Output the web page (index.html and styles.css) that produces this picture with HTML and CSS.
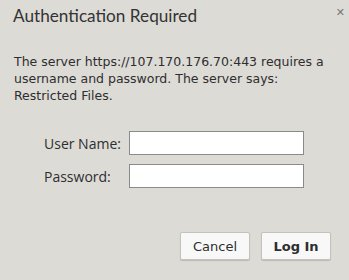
FILE: index.html
```html
<!DOCTYPE html>
<html lang="en">
<head>
    <meta charset="UTF-8">
    <title>Authentication Required</title>
    <link rel="stylesheet" href="styles.css">
</head>
<body>
    <div class="dialog">
        <div class="header">
            <h1>Authentication Required</h1>
            <span class="close">&#x2715;</span>
        </div>
        <p class="message">The server https://107.170.176.70:443 requires a username and password. The server says: Restricted Files.</p>
        <div class="form">
            <label for="user">User Name:</label>
            <input id="user" type="text">
            <label for="pass">Password:</label>
            <input id="pass" type="password">
        </div>
        <div class="button-container">
            <button class="cancel">Cancel</button>
            <button class="login">Log In</button>
        </div>
    </div>
</body>
</html>
```

FILE: styles.css
```css
body {
    margin: 0;
    background-color: #dddbd6;
    font-family: "DejaVu Sans", sans-serif;
    color: #2e2e2e;
}
.dialog {
    width: 349px;
    height: 280px;
    box-sizing: border-box;
    padding: 5px 0 0 13px;
}
.header {
    display: flex;
    justify-content: space-between;
    align-items: flex-start;
}
h1 {
    margin: 0;
    font-family: Lato, sans-serif;
    font-weight: normal;
    font-size: 17.2px;
    line-height: 22px;
    color: #333;
}
.close {
    font-size: 11px;
    font-weight: bold;
    color: #777;
    margin: 1px 4px 0 0;
}
.message {
    margin: 26px 0 0 1px;
    width: 320px;
    font-size: 12.5px;
    line-height: 17px;
}
.form {
    display: grid;
    grid-template-columns: 85px 175px;
    row-gap: 9px;
    align-items: center;
    margin: 27px 0 0 31px;
    font-family: "Open Sans", sans-serif;
    font-size: 14px;
}
input {
    box-sizing: border-box;
    height: 24px;
    border: 1px solid #8a8a8a;
    background-color: #fff;
    margin: 0;
}
.button-container {
    display: flex;
    justify-content: flex-end;
    gap: 11px;
    margin: 44px 18px 0 0;
}
button {
    width: 70px;
    height: 28px;
    font-family: "DejaVu Sans", sans-serif;
    font-size: 13px;
    color: #2e2e2e;
    background-color: #f8f8f8;
    border: 1px solid #c4c2bd;
    border-radius: 2px;
    box-shadow: 0 1px 1px rgba(0, 0, 0, 0.15);
}
.login {
    font-weight: bold;
}
```
